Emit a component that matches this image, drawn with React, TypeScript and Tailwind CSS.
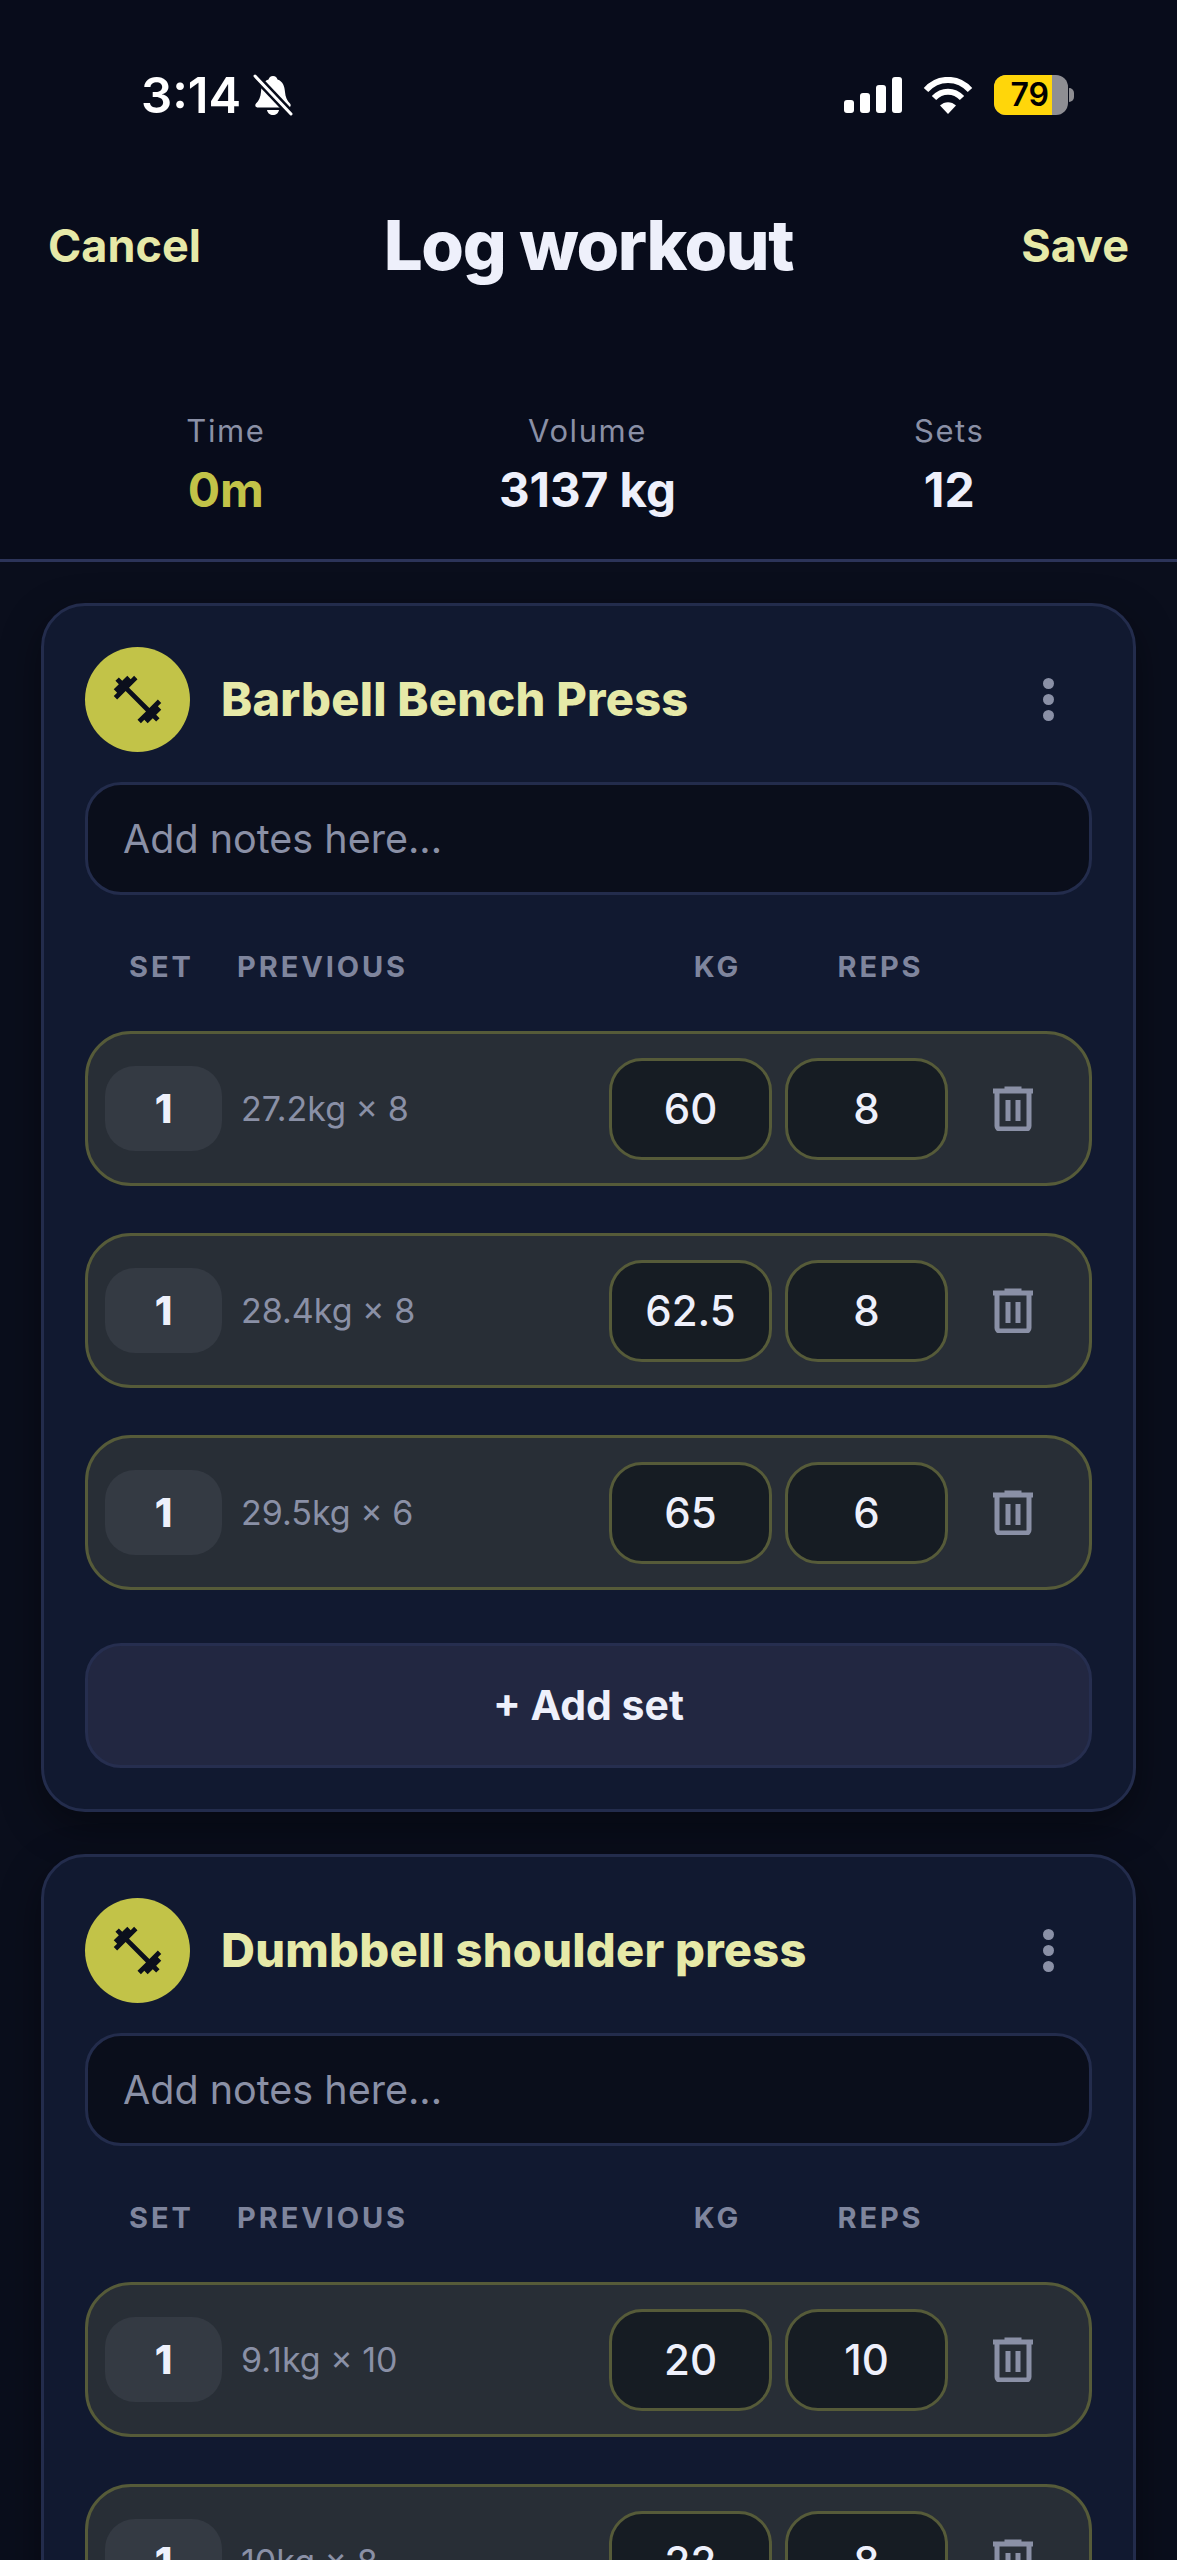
import { MdFitnessCenter } from "react-icons/md";

interface WorkoutSet {
  previous: string;
  kg: string;
  reps: string;
}

interface Exercise {
  name: string;
  sets: WorkoutSet[];
}

const exercises: Exercise[] = [
  {
    name: "Barbell Bench Press",
    sets: [
      { previous: "27.2kg × 8", kg: "60", reps: "8" },
      { previous: "28.4kg × 8", kg: "62.5", reps: "8" },
      { previous: "29.5kg × 6", kg: "65", reps: "6" },
    ],
  },
  {
    name: "Dumbbell shoulder press",
    sets: [
      { previous: "9.1kg × 10", kg: "20", reps: "10" },
      { previous: "10kg × 8", kg: "22", reps: "8" },
    ],
  },
];

function BellOff() {
  return (
    <svg width="40" height="42" viewBox="0 0 40 42" fill="none" className="ml-[12px]">
      <path
        d="M20 2c-2.500 0-4 1.700-4.500 3.500C10 7.500 8.500 12 8 18c-.4 5-2 8.500-5 11.500-1.500 1.700-.5 4 2 4h30c2.500 0 3.500-2.300 2-4-3-3-4.600-6.500-5-11.500-.5-6-2-10.500-7.500-12.500C24 3.700 22.500 2 20 2z"
        fill="white"
      />
      <path d="M14 36h12c-.5 3-3 5-6 5s-5.500-2-6-5z" fill="white" />
      <path d="M1 1l38 40" stroke="#080c1b" strokeWidth="8" />
      <path d="M2 2l36 38" stroke="white" strokeWidth="3" strokeLinecap="round" />
    </svg>
  );
}

function StatusIcons() {
  return (
    <div className="flex items-center">
      <div className="flex h-[36px] items-end gap-[6px]">
        <div className="h-[13px] w-[10px] rounded-[3px] bg-white" />
        <div className="h-[20px] w-[10px] rounded-[3px] bg-white" />
        <div className="h-[28px] w-[10px] rounded-[3px] bg-white" />
        <div className="h-[36px] w-[10px] rounded-[3px] bg-white" />
      </div>
      <svg width="50" height="37" viewBox="0 0 50 37" fill="none" className="ml-[21px]">
        <path d="M3 13C15-.5 35-.5 47 13" stroke="white" strokeWidth="6" />
        <path d="M11 21c8-8.500 20-8.500 28 0" stroke="white" strokeWidth="6" />
        <path d="M17 28.500c4.500-4.500 11.500-4.500 16 0L25 37z" fill="white" />
      </svg>
      <div className="relative ml-[21px] flex">
        <div className="flex h-[40px] w-[74px] overflow-hidden rounded-[12px] bg-[#8e8e93]">
          <div className="flex w-[58px] items-center justify-end bg-[#ffd60a] pr-[3px] text-[32px] font-semibold text-black">
            79
          </div>
        </div>
        <div className="absolute left-[75px] top-[13px] h-[14px] w-[5px] rounded-r-full bg-[#8e8e93]" />
      </div>
    </div>
  );
}

function TrashIcon() {
  return (
    <svg width="40" height="45" viewBox="0 0 40 45" fill="none">
      <path d="M13 3.500V2h14v1.500" stroke="#8a90a6" strokeWidth="3" />
      <path d="M0 5h40" stroke="#8a90a6" strokeWidth="5" />
      <path
        d="M4 6v34a3 3 0 0 0 3 3h26a3 3 0 0 0 3-3V6"
        stroke="#8a90a6"
        strokeWidth="5"
      />
      <path d="M15 14v21M25 14v21" stroke="#8a90a6" strokeWidth="5" />
    </svg>
  );
}

function SetRow({ set }: { set: WorkoutSet }) {
  return (
    <div className="flex h-[155px] shrink-0 items-center rounded-[46px] border-[3px] border-[#565b39] bg-[#282e36] pl-[17px] pr-[56px]">
      <div className="flex h-[85px] w-[117px] items-center justify-center rounded-[30px] bg-[#343a43] text-[40px] font-extrabold text-[#eef0fb]">
        1
      </div>
      <div className="ml-[19px] flex-1 text-[34px] text-[#8a90a6]">{set.previous}</div>
      <div className="flex gap-[13px]">
        <div className="flex h-[102px] w-[163px] items-center justify-center rounded-[33px] border-[3px] border-[#565b39] bg-[#161c23] text-[42px] font-medium text-[#eef0fb]">
          {set.kg}
        </div>
        <div className="flex h-[102px] w-[163px] items-center justify-center rounded-[33px] border-[3px] border-[#565b39] bg-[#161c23] text-[42px] font-medium text-[#eef0fb]">
          {set.reps}
        </div>
      </div>
      <div className="ml-[45px]">
        <TrashIcon />
      </div>
    </div>
  );
}

function ExerciseCard({ exercise }: { exercise: Exercise }) {
  return (
    <div className="rounded-[44px] border-[3px] border-[#232c4c] bg-[#111930] p-[41px] shadow-[0_14px_40px_rgba(0,0,0,0.4)]">
      <div className="flex h-[105px] items-center">
        <div className="flex h-[105px] w-[105px] items-center justify-center rounded-full bg-[#c2c348]">
          <MdFitnessCenter size={57} color="#0b0f1c" />
        </div>
        <div className="ml-[31px] flex-1 text-[47px] font-extrabold tracking-[0.005em] text-[#e6e9a8]">
          {exercise.name}
        </div>
        <div className="mr-[38px] flex flex-col gap-[5px]">
          <div className="h-[11px] w-[11px] rounded-full bg-[#8a90a6]" />
          <div className="h-[11px] w-[11px] rounded-full bg-[#8a90a6]" />
          <div className="h-[11px] w-[11px] rounded-full bg-[#8a90a6]" />
        </div>
      </div>

      <div className="mt-[30px] flex h-[113px] items-center rounded-[36px] border-[3px] border-[#232c4c] bg-[#0a0e1b] pl-[35px] pt-[2px] text-[39.500px] text-[#8a90a6]">
        Add notes here...
      </div>

      <div className="grid h-[136px] grid-cols-[108px_1fr_163px_163px] items-center pl-[44px] pr-[130px] pt-[8px] text-[29px] font-bold tracking-[0.1em] text-[#7f859d]">
        <div>SET</div>
        <div>PREVIOUS</div>
        <div className="text-center">KG</div>
        <div className="text-center">REPS</div>
      </div>

      <div className="flex flex-col gap-[47px]">
        {exercise.sets.map((set, i) => (
          <SetRow key={i} set={set} />
        ))}
      </div>

      <div className="mt-[53px] flex h-[125px] items-center justify-center rounded-[36px] border-[3px] border-[#262e4f] bg-[#222741] text-[41px] font-bold text-[#eef0fb]">
        + Add set
      </div>
    </div>
  );
}

export default function App() {
  return (
    <div className="h-[2560px] overflow-hidden bg-[#0a0e1c] [font-family:Inter,sans-serif]">
      <header className="bg-[#080c1b]">
        <div className="flex h-[190px] items-start justify-between pl-[141px] pr-[109px] pt-[70px] text-white">
          <div className="flex h-[50px] items-center text-[49px] font-semibold leading-none">
            3:14
            <BellOff />
          </div>
          <div className="flex h-[50px] items-center">
            <StatusIcons />
          </div>
        </div>

        <div className="grid h-[112px] grid-cols-[1fr_auto_1fr] items-center px-[48px]">
          <button className="justify-self-start text-[45px] font-bold text-[#e6e9a8]">Cancel</button>
          <h1 className="text-[69px] font-extrabold tracking-[-0.02em] text-[#eef0fb]">Log workout</h1>
          <button className="justify-self-end text-[45px] font-bold text-[#e6e9a8]">Save</button>
        </div>

        <div className="grid grid-cols-3 border-b-[3px] border-[#2c3459] pb-[41px] pl-[45px] pr-[47px] pt-[109px] text-center">
          <div>
            <div className="text-[31px] leading-[40px] tracking-[0.05em] text-[#8a90a6]">Time</div>
            <div className="mt-[10px] text-[48px] font-bold leading-[57px] text-[#c2c348]">0m</div>
          </div>
          <div>
            <div className="text-[31px] leading-[40px] tracking-[0.05em] text-[#8a90a6]">Volume</div>
            <div className="mt-[10px] text-[47.500px] font-bold leading-[57px] text-[#eef0fb]">3137 kg</div>
          </div>
          <div>
            <div className="text-[31px] leading-[40px] tracking-[0.05em] text-[#8a90a6]">Sets</div>
            <div className="mt-[10px] text-[48px] font-bold leading-[57px] text-[#eef0fb]">12</div>
          </div>
        </div>
      </header>

      <div className="flex flex-col gap-[42px] px-[41px] pt-[41px]">
        {exercises.map((exercise) => (
          <ExerciseCard key={exercise.name} exercise={exercise} />
        ))}
      </div>
    </div>
  );
}
